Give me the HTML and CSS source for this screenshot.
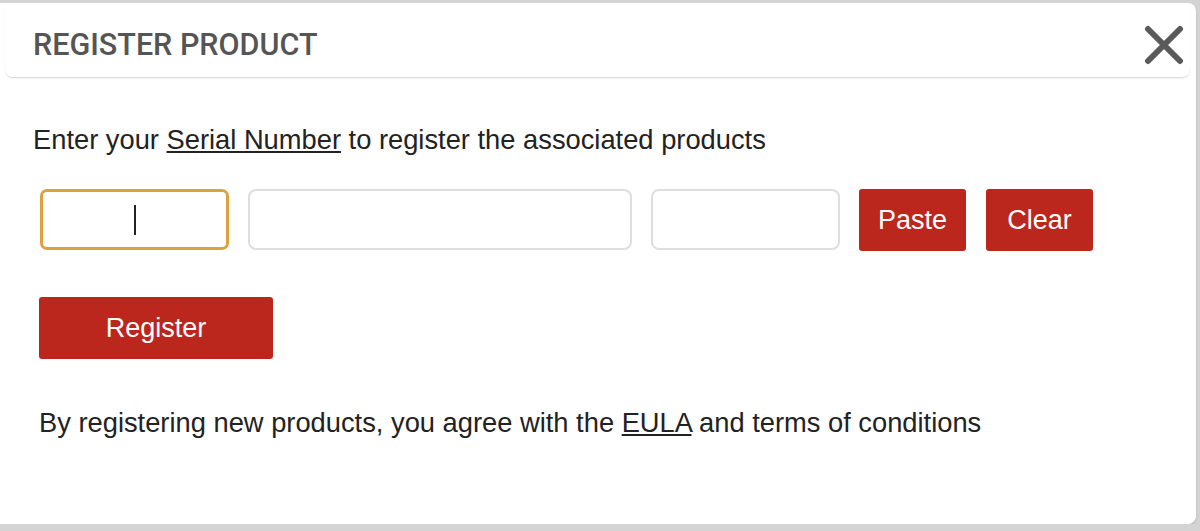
FILE: index.html
```html
<!DOCTYPE html>
<html lang="en">
<head>
    <meta charset="UTF-8">
    <meta name="viewport" content="width=device-width, initial-scale=1.0">
    <title>Register Product</title>
    <link rel="stylesheet" href="styles.css">
</head>
<body>
    <div class="modal">
        <div class="modal-header">
            <h2>REGISTER PRODUCT</h2>
            <button class="close" aria-label="Close">
                <svg width="40" height="40" viewBox="0 0 40 40">
                    <path d="M4 4 L36 36 M36 4 L4 36" stroke="#5a5a5a" stroke-width="6" stroke-linecap="round"/>
                </svg>
            </button>
        </div>

        <div class="modal-body">
            <p class="intro">Enter your <a href="#">Serial Number</a> to register the associated products</p>

            <div class="serial-row">
                <div class="field">
                    <input type="text" class="serial serial-short focused">
                    <span class="caret"></span>
                </div>
                <input type="text" class="serial serial-long">
                <input type="text" class="serial serial-short">
                <button class="btn">Paste</button>
                <button class="btn">Clear</button>
            </div>

            <button class="btn btn-register">Register</button>

            <p class="terms">By registering new products, you agree with the <a href="#">EULA</a> and terms of conditions</p>
        </div>
    </div>
</body>
</html>
```

FILE: styles.css
```css
/* page */
body {
    margin: 0;
    background-color: #d4d4d4;
    font-family: "Liberation Sans", Arial, sans-serif;
    color: #222;
}
.modal {
    margin-top: 3px;
    width: 1196px;
    height: 521px;
    background-color: #fff;
    border-radius: 0 8px 8px 0;
    box-shadow: 0 2px 3px rgba(0, 0, 0, 0.12);
}

/* header */
.modal-header {
    display: flex;
    align-items: center;
    justify-content: space-between;
    box-sizing: border-box;
    height: 75px;
    margin: 0 6px 0 5px;
    padding: 9px 6px 0 28px;
    border-bottom: 1px solid #dcdcdc;
    border-radius: 8px;
    box-shadow: 0 1px 2px rgba(0, 0, 0, 0.06);
}
.modal-header h2 {
    margin: 0;
    font-family: Roboto, "Liberation Sans", sans-serif;
    font-weight: 500;
    font-size: 30.5px;
    color: #555;
}
.close {
    display: flex;
    padding: 0;
    background: none;
    border: none;
    cursor: pointer;
}

/* body */
.modal-body {
    padding: 0 0 0 40px;
}
.intro {
    margin: 46px 0 0 -7px;
    font-size: 27.3px;
    line-height: 32px;
}
.intro a, .terms a {
    color: #222;
    text-decoration: underline;
}
.serial-row {
    display: flex;
    gap: 19px;
    margin-top: 33px;
}
.field {
    position: relative;
    display: flex;
}
.serial {
    box-sizing: border-box;
    height: 61px;
    padding: 0 10px;
    border: 2px solid #dedede;
    border-radius: 8px;
    background: #fff;
    font-size: 25px;
    outline: none;
}
.serial-short {
    width: 189px;
}
.serial-long {
    width: 384px;
}
.serial.focused {
    border: 3px solid #dea13e;
    border-radius: 7px;
}
.caret {
    position: absolute;
    left: 94px;
    top: 16px;
    width: 2px;
    height: 30px;
    background-color: #222;
}
.btn {
    box-sizing: border-box;
    width: 107px;
    height: 62px;
    padding: 0;
    background-color: #bb271d;
    color: #fff;
    border: none;
    border-radius: 3px;
    font-family: "Liberation Sans", Arial, sans-serif;
    font-size: 27px;
    cursor: pointer;
}
.btn + .btn {
    margin-left: 1px;
}
.btn-register {
    display: block;
    width: 234px;
    margin-top: 46px;
    margin-left: -1px;
}
.terms {
    margin: 48px 0 0 -1px;
    font-size: 27.3px;
    line-height: 32px;
}
```
